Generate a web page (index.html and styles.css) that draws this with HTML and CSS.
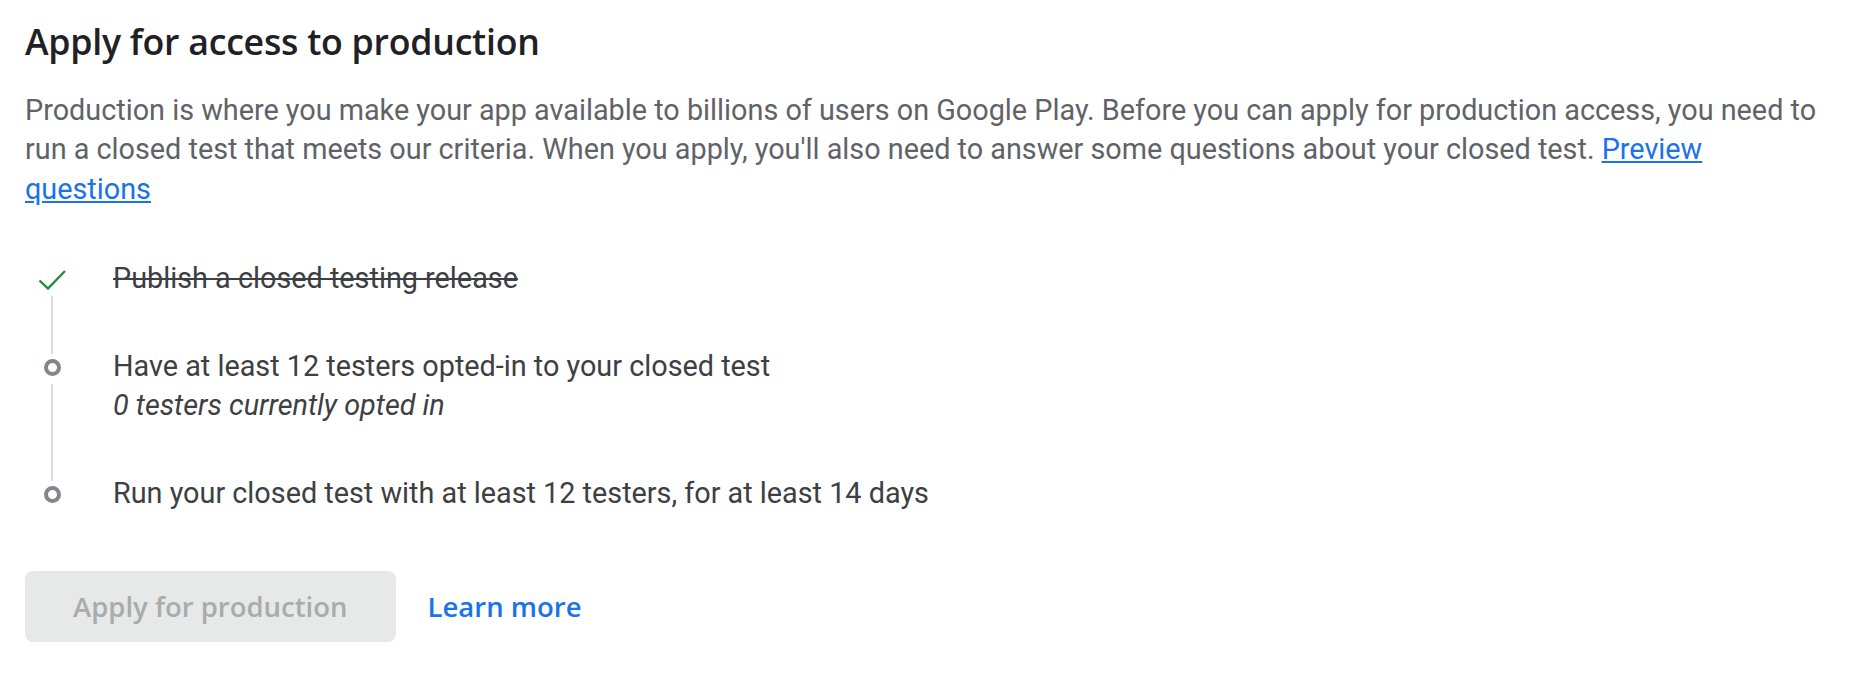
FILE: index.html
```html
<!DOCTYPE html>
<html lang="en">
<head>
  <meta charset="UTF-8" />
  <meta name="viewport" content="width=device-width, initial-scale=1.0"/>
  <title>Apply for access to production</title>
  <link rel="stylesheet" href="styles.css">
</head>
<body>
  <main class="panel">
    <h2 class="panel-title">Apply for access to production</h2>
    <p class="panel-text">
      Production is where you make your app available to billions of users on Google Play. Before you can apply for production access, you need to
      run a closed test that meets our criteria. When you apply, you'll also need to answer some questions about your closed test.
      <a href="#" class="text-link">Preview questions</a>
    </p>

    <ol class="steps">
      <li class="step step-done">
        <div class="step-rail">
          <span class="step-icon">
            <svg width="28" height="21" viewBox="0 0 28 21">
              <polyline points="1.5,11.5 10,19.5 27,2" fill="none" stroke="#1e8e3e" stroke-width="2.4"/>
            </svg>
          </span>
          <span class="step-line"></span>
        </div>
        <div class="step-body">
          <p class="step-title">Publish a closed testing release</p>
        </div>
      </li>
      <li class="step">
        <div class="step-rail">
          <span class="step-icon"><span class="dot"></span></span>
          <span class="step-line"></span>
        </div>
        <div class="step-body">
          <p class="step-title">Have at least 12 testers opted-in to your closed test</p>
          <p class="step-note">0 testers currently opted in</p>
        </div>
      </li>
      <li class="step">
        <div class="step-rail">
          <span class="step-icon"><span class="dot"></span></span>
        </div>
        <div class="step-body">
          <p class="step-title">Run your closed test with at least 12 testers, for at least 14 days</p>
        </div>
      </li>
    </ol>

    <div class="actions">
      <button class="btn-apply" disabled>Apply for production</button>
      <a href="#" class="learn-more">Learn more</a>
    </div>
  </main>
</body>
</html>
```

FILE: styles.css
```css
* {
  margin: 0;
  padding: 0;
  box-sizing: border-box;
}

body {
  font-family: Roboto, 'Liberation Sans', sans-serif;
  background-color: #ffffff;
  color: #3c4043;
}

.panel {
  width: 1850px;
  padding: 17px 25px 0 25px;
}

.panel-title {
  font-family: 'Open Sans', Roboto, sans-serif;
  font-size: 35.7px;
  font-weight: 600;
  line-height: 48px;
  color: #202124;
  letter-spacing: -0.25px;
}

.panel-text {
  margin-top: 26px;
  font-size: 28.8px;
  line-height: 39.4px;
  color: #5f6368;
}

.text-link {
  color: #1a73e8;
}

.steps {
  list-style: none;
  margin-top: 50px;
}

.step {
  display: flex;
  align-items: stretch;
}

.step-rail {
  display: flex;
  flex-direction: column;
  align-items: center;
  width: 54px;
  flex-shrink: 0;
}

.step-icon {
  display: flex;
  justify-content: center;
  align-items: center;
  height: 28px;
  margin-top: 6px;
}

.step-line {
  flex: 1;
  width: 2px;
  background-color: #dadce0;
  margin-top: 3px;
  margin-bottom: -7px;
}

.dot {
  width: 17px;
  height: 17px;
  border: 4.5px solid #80868b;
  border-radius: 50%;
}

.step-body {
  margin-left: 34px;
  padding-bottom: 48.4px;
  font-size: 28.8px;
  line-height: 39.4px;
  color: #3c4043;
}

.step:last-child .step-body {
  padding-bottom: 0;
}

.step-done .step-title {
  text-decoration: line-through;
}

.step-note {
  font-style: italic;
}

.actions {
  display: flex;
  align-items: center;
  gap: 32px;
  margin-top: 57px;
}

.btn-apply {
  height: 71px;
  padding: 0 48px;
  font-family: 'Open Sans', Roboto, sans-serif;
  font-size: 27.5px;
  font-weight: 600;
  color: #a9abac;
  background-color: #e7e8e8;
  border: none;
  border-radius: 8px;
}

.learn-more {
  font-family: 'Open Sans', Roboto, sans-serif;
  font-size: 27.5px;
  font-weight: 600;
  color: #1a73e8;
  text-decoration: none;
}
```
